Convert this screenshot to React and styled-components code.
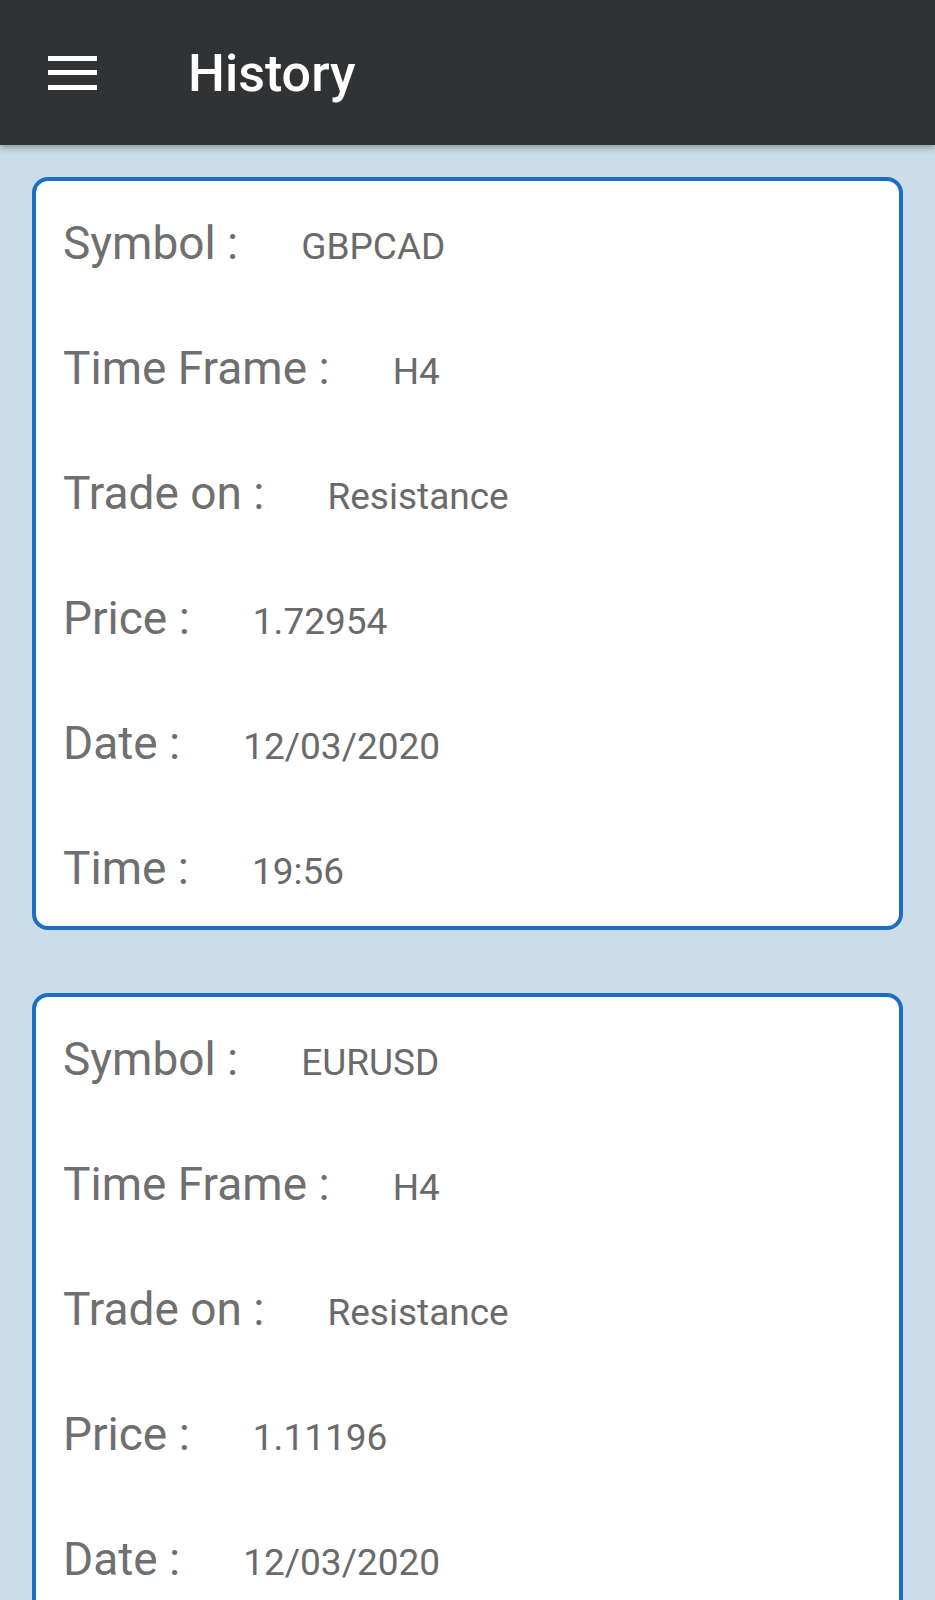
import React from "react";
import styled, { createGlobalStyle } from "styled-components";

const Global = createGlobalStyle`
  html, body { margin: 0; padding: 0; }
  body {
    background: #cbdde9;
    font-family: Roboto, "Noto Sans", sans-serif;
  }
`;

const Page = styled.div`
  min-height: 1600px;
  background: #cbdde9;
`;

const AppBar = styled.header`
  height: 145px;
  background: #313234;
  display: flex;
  align-items: center;
  box-shadow: 0 3px 6px rgba(0, 0, 0, 0.3);
  position: relative;
  z-index: 1;
`;

const MenuButton = styled.div`
  width: 49px;
  margin-left: 48px;
  display: flex;
  flex-direction: column;
  gap: 9.5px;
  margin-top: 0px;
`;

const MenuLine = styled.span`
  display: block;
  height: 5px;
  background: #ffffff;
`;

const Title = styled.h1`
  margin: 2px 0 0 91px;
  color: #ffffff;
  font-weight: 500;
  font-size: 52px;
  line-height: 1;
`;

const List = styled.main`
  padding: 32px 32px 0;
  display: flex;
  flex-direction: column;
  gap: 63px;
`;

const Card = styled.section`
  background: #ffffff;
  border: 4px solid #1b6ec2;
  border-radius: 16px;
  padding: 0 28px 0 27px;
`;

const Row = styled.div`
  display: flex;
  align-items: baseline;
  height: 125px;
  line-height: 125px;

  &:last-child {
    height: 120px;
  }
`;

const Label = styled.span`
  font-size: 46px;
  color: #6f6f6f;
`;

const Value = styled.span`
  font-size: 37px;
  color: #6a6a6a;
  margin-left: 63px;
`;

const trades = [
  { symbol: "GBPCAD", frame: "H4", on: "Resistance", price: "1.72954", date: "12/03/2020", time: "19:56" },
  { symbol: "EURUSD", frame: "H4", on: "Resistance", price: "1.11196", date: "12/03/2020", time: "19:56" },
];

export default function App() {
  return (
    <Page>
      <Global />
      <AppBar>
        <MenuButton>
          <MenuLine />
          <MenuLine />
          <MenuLine />
        </MenuButton>
        <Title>History</Title>
      </AppBar>
      <List>
        {trades.map((t, i) => (
          <Card key={i}>
            <Row><Label>Symbol :</Label><Value>{t.symbol}</Value></Row>
            <Row><Label>Time Frame :</Label><Value>{t.frame}</Value></Row>
            <Row><Label>Trade on :</Label><Value>{t.on}</Value></Row>
            <Row><Label>Price :</Label><Value>{t.price}</Value></Row>
            <Row><Label>Date :</Label><Value>{t.date}</Value></Row>
            <Row><Label>Time :</Label><Value>{t.time}</Value></Row>
          </Card>
        ))}
      </List>
    </Page>
  );
}
